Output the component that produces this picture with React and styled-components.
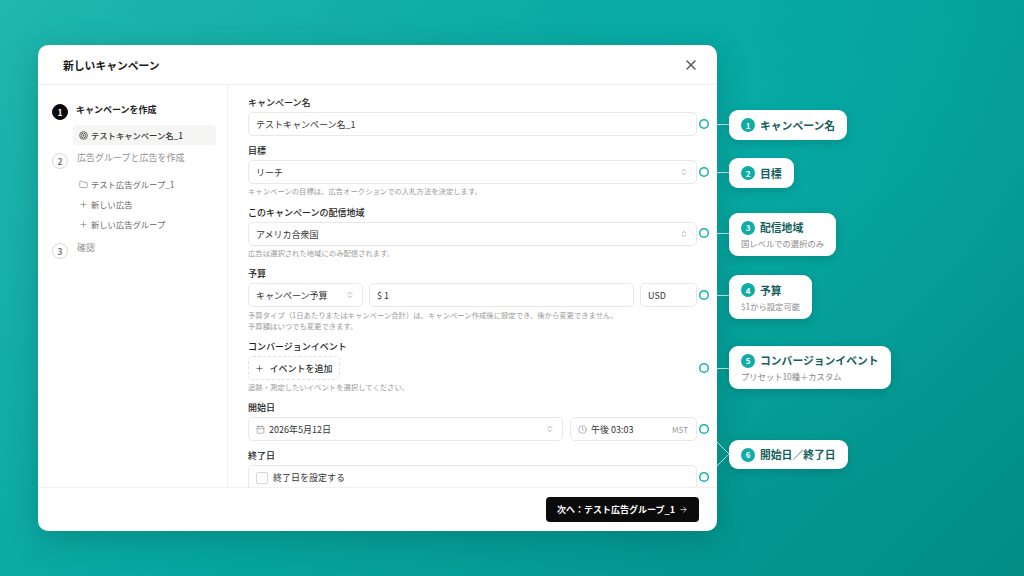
import React from "react";
import styled, { createGlobalStyle } from "styled-components";
import {
  X,
  Folder,
  Plus,
  Calendar,
  Clock,
  ChevronsUpDown,
  ArrowRight,
} from "lucide-react";

const GlobalStyle = createGlobalStyle`
  html, body {
    margin: 0;
    padding: 0;
    width: 1024px;
    height: 576px;
    overflow: hidden;
  }
  * { box-sizing: border-box; }
  body {
    font-family: "Noto Sans CJK JP", "Noto Sans", sans-serif;
    color: #171717;
  }
`;

const Page = styled.div`
  position: relative;
  width: 1024px;
  height: 576px;
  padding: 45px 0 0 38px;
  background:
    radial-gradient(circle at 72% 20%, rgba(8, 176, 170, 0.55), rgba(8, 176, 170, 0) 45%),
    linear-gradient(135deg, #1fb7ae 0%, #07a6a0 45%, #028d87 100%);
`;

const Modal = styled.div`
  width: 679px;
  height: 486px;
  background: #fff;
  border-radius: 10px;
  display: flex;
  flex-direction: column;
  overflow: hidden;
  box-shadow: 0 8px 30px rgba(0, 60, 60, 0.25);
`;

const ModalHeader = styled.div`
  height: 40px;
  flex: none;
  display: flex;
  align-items: center;
  justify-content: space-between;
  padding: 0 18px 0 25px;
  border-bottom: 1px solid #f1f1ef;
`;

const ModalTitle = styled.div`
  font-size: 10.8px;
  font-weight: 700;
  color: #1a1a1a;
`;

const ModalBody = styled.div`
  flex: 1;
  min-height: 0;
  display: flex;
`;

const Sidebar = styled.div`
  width: 190px;
  flex: none;
  border-right: 1px solid #f1f1ef;
  padding: 18px 11px 0 14px;
`;

const Step = styled.div`
  display: flex;
  gap: 8px;
`;

const StepNumber = styled.div`
  width: 16px;
  height: 16px;
  flex: none;
  margin-top: ${(p) => (p.$active ? 1 : 2)}px;
  border-radius: 50%;
  display: flex;
  align-items: center;
  justify-content: center;
  font-size: 8.5px;
  font-weight: 700;
  background: ${(p) => (p.$active ? "#0a0a0a" : "#fff")};
  color: ${(p) => (p.$active ? "#fff" : "#777")};
  border: 1px solid ${(p) => (p.$active ? "#0a0a0a" : "#d8d8d6")};
`;

const StepLabel = styled.div`
  font-size: 9px;
  line-height: 14px;
  font-weight: ${(p) => (p.$active ? 600 : 400)};
  color: ${(p) => (p.$active ? "#222" : "#8f8f8f")};
  margin-left: ${(p) => (p.$active ? 0 : 1)}px;
`;

const SideItem = styled.div`
  height: 20px;
  margin-left: 21px;
  padding-left: 6px;
  display: flex;
  align-items: center;
  gap: 3px;
  border-radius: 4px;
  font-size: 8.3px;
  font-weight: ${(p) => (p.$active ? 500 : 400)};
  color: ${(p) => (p.$active ? "#333" : "#666")};
  background: ${(p) => (p.$active ? "#f5f5f3" : "transparent")};
`;

const SideList = styled.div`
  margin: ${(p) => p.$top}px 0 ${(p) => p.$bottom}px;
`;

const Form = styled.div`
  flex: 1;
  min-width: 0;
  overflow: hidden;
  padding: 11px 20px 0 20px;
`;

const Field = styled.div`
  margin-bottom: ${(p) => p.$gap}px;
`;

const Label = styled.div`
  font-size: 9px;
  line-height: 14px;
  font-weight: 500;
  color: #222;
  margin-bottom: 2px;
`;

const Row = styled.div`
  display: flex;
  gap: ${(p) => p.$gap || 6}px;
`;

const Control = styled.div`
  height: 24px;
  flex: ${(p) => (p.$width ? `0 0 ${p.$width}px` : 1)};
  min-width: 0;
  display: flex;
  align-items: center;
  gap: 4px;
  padding: 0 8px 0 7px;
  border: 1px solid #e8e8e6;
  border-radius: 5px;
  background: #fff;
  font-size: 9px;
  color: #333;
`;

const Grow = styled.span`
  flex: 1;
  min-width: 0;
  white-space: nowrap;
`;

const Zone = styled.span`
  font-size: 8px;
  color: #999;
`;

const Hint = styled.div`
  font-size: 7.35px;
  line-height: 11px;
  color: #9a9a9a;
  margin-top: ${(p) => p.$top ?? 1}px;
`;

const AddButton = styled.div`
  width: 92px;
  height: 24px;
  display: flex;
  align-items: center;
  justify-content: center;
  gap: 5px;
  border: 1px dashed #e2e2e0;
  border-radius: 5px;
  font-size: 9px;
  font-weight: 500;
  color: #333;
`;

const CheckRow = styled(Control)`
  height: 30px;
  padding: 0 0 5px 7px;
`;

const Check = styled.span`
  width: 12px;
  height: 12px;
  border: 1px solid #d8d8d6;
  border-radius: 2px;
  margin-right: 1px;
`;

const ModalFooter = styled.div`
  height: 44px;
  flex: none;
  display: flex;
  align-items: center;
  justify-content: flex-end;
  padding: 0 18px 0 0;
  border-top: 1px solid #f1f1ef;
`;

const NextButton = styled.div`
  width: 153px;
  height: 25px;
  display: flex;
  align-items: center;
  justify-content: center;
  gap: 4px;
  background: #0b0b0b;
  border-radius: 4px;
  color: #fff;
  font-size: 9px;
  font-weight: 600;
`;

// annotations sit on top of the screenshot, so they are placed by coordinates
const Ring = styled.span`
  position: absolute;
  left: 699px;
  top: ${(p) => p.$y - 5}px;
  width: 10px;
  height: 10px;
  border-radius: 50%;
  background: #fff;
  box-shadow: inset 0 0 0 1.5px #12b3ad;
`;

const Connector = styled.span`
  position: absolute;
  left: 717px;
  top: ${(p) => p.$y - 0.5}px;
  width: 12px;
  height: 1px;
  background: rgba(255, 255, 255, 0.7);
`;

const ForkLines = styled.svg`
  position: absolute;
  left: 717px;
  top: 441px;
`;

const Callout = styled.div`
  position: absolute;
  left: 729px;
  top: ${(p) => p.$top}px;
  height: ${(p) => p.$height}px;
  padding: 0 12px;
  display: flex;
  flex-direction: column;
  justify-content: center;
  background: #fff;
  border-radius: 9px;
  box-shadow: 0 3px 10px rgba(0, 60, 60, 0.22);
  white-space: nowrap;
`;

const CalloutTitle = styled.div`
  display: flex;
  align-items: center;
  gap: 5px;
  font-size: 10.8px;
  line-height: 15px;
  font-weight: 700;
  color: #145f5c;
`;

const CalloutNumber = styled.span`
  width: 14px;
  height: 14px;
  border-radius: 50%;
  background: #10aca6;
  color: #fff;
  font-size: 8px;
  font-weight: 700;
  display: flex;
  align-items: center;
  justify-content: center;
`;

const CalloutText = styled.div`
  font-size: 8.3px;
  line-height: 12px;
  margin-top: 2px;
  color: #888;
`;

const callouts = [
  { n: 1, title: "キャンペーン名", top: 110, height: 30 },
  { n: 2, title: "目標", top: 158, height: 30 },
  { n: 3, title: "配信地域", text: "国レベルでの選択のみ", top: 213, height: 43 },
  { n: 4, title: "予算", text: "$1から設定可能", top: 275, height: 44 },
  { n: 5, title: "コンバージョンイベント", text: "プリセット10種＋カスタム", top: 346, height: 43 },
  { n: 6, title: "開始日／終了日", top: 440, height: 29 },
];

const ringRows = [124, 172, 233, 295, 368, 429, 477];
const connectorRows = [124, 172, 233, 295, 368];

const TargetIcon = () => (
  <svg width="9" height="9" viewBox="0 0 10 10" fill="none">
    <circle cx="5" cy="5" r="4.3" stroke="#555" strokeWidth="1" />
    <circle cx="5" cy="5" r="2.5" stroke="#555" strokeWidth="1" />
    <circle cx="5" cy="5" r="1" fill="#555" />
  </svg>
);

const App = () => {
  return (
    <Page>
      <GlobalStyle />
      <Modal>
        <ModalHeader>
          <ModalTitle>新しいキャンペーン</ModalTitle>
          <X size={16} color="#555" strokeWidth={2} />
        </ModalHeader>
        <ModalBody>
          <Sidebar>
            <Step>
              <StepNumber $active>1</StepNumber>
              <StepLabel $active>キャンペーンを作成</StepLabel>
            </Step>
            <SideList $top={5} $bottom={6}>
              <SideItem $active>
                <TargetIcon />
                テストキャンペーン名_1
              </SideItem>
            </SideList>
            <Step>
              <StepNumber>2</StepNumber>
              <StepLabel>広告グループと広告を作成</StepLabel>
            </Step>
            <SideList $top={5} $bottom={7}>
              <SideItem>
                <Folder size={9} strokeWidth={1.4} />
                テスト広告グループ_1
              </SideItem>
              <SideItem>
                <Plus size={9} strokeWidth={1.4} />
                新しい広告
              </SideItem>
              <SideItem>
                <Plus size={9} strokeWidth={1.4} />
                新しい広告グループ
              </SideItem>
            </SideList>
            <Step>
              <StepNumber>3</StepNumber>
              <StepLabel>確認</StepLabel>
            </Step>
          </Sidebar>
          <Form>
            <Field $gap={8}>
              <Label>キャンペーン名</Label>
              <Control>テストキャンペーン名_1</Control>
            </Field>
            <Field $gap={10}>
              <Label>目標</Label>
              <Control>
                <Grow>リーチ</Grow>
                <ChevronsUpDown size={8} color="#888" />
              </Control>
              <Hint>キャンペーンの目標は、広告オークションでの入札方法を決定します。</Hint>
            </Field>
            <Field $gap={9}>
              <Label>このキャンペーンの配信地域</Label>
              <Control>
                <Grow>アメリカ合衆国</Grow>
                <ChevronsUpDown size={8} color="#888" />
              </Control>
              <Hint>広告は選択された地域にのみ配信されます。</Hint>
            </Field>
            <Field $gap={9}>
              <Label>予算</Label>
              <Row>
                <Control $width={115}>
                  <Grow>キャンペーン予算</Grow>
                  <ChevronsUpDown size={8} color="#888" />
                </Control>
                <Control>$ 1</Control>
                <Control $width={57}>USD</Control>
              </Row>
              <Hint $top={2}>
                予算タイプ（1日あたりまたはキャンペーン合計）は、キャンペーン作成後に設定でき、後から変更できません。
              </Hint>
              <Hint $top={0}>予算額はいつでも変更できます。</Hint>
            </Field>
            <Field $gap={9}>
              <Label>コンバージョンイベント</Label>
              <AddButton>
                <Plus size={9} strokeWidth={1.6} />
                イベントを追加
              </AddButton>
              <Hint>追跡・測定したいイベントを選択してください。</Hint>
            </Field>
            <Field $gap={8}>
              <Label>開始日</Label>
              <Row $gap={7}>
                <Control>
                  <Calendar size={9} color="#777" strokeWidth={1.4} />
                  <Grow>2026年5月12日</Grow>
                  <ChevronsUpDown size={8} color="#888" />
                </Control>
                <Control $width={127}>
                  <Clock size={9} color="#777" strokeWidth={1.4} />
                  <Grow>午後 03:03</Grow>
                  <Zone>MST</Zone>
                </Control>
              </Row>
            </Field>
            <Field $gap={0}>
              <Label>終了日</Label>
              <CheckRow>
                <Check />
                終了日を設定する
              </CheckRow>
            </Field>
          </Form>
        </ModalBody>
        <ModalFooter>
          <NextButton>
            次へ：テスト広告グループ_1
            <ArrowRight size={9} strokeWidth={1.8} />
          </NextButton>
        </ModalFooter>
      </Modal>

      {ringRows.map((y) => (
        <Ring key={y} $y={y} />
      ))}
      {connectorRows.map((y) => (
        <Connector key={y} $y={y} />
      ))}
      <ForkLines width="12" height="26" viewBox="0 0 12 26" fill="none">
        <path d="M0 1 L12 13 L0 25" stroke="rgba(255,255,255,0.7)" strokeWidth="1" />
      </ForkLines>
      {callouts.map((c) => (
        <Callout key={c.n} $top={c.top} $height={c.height}>
          <CalloutTitle>
            <CalloutNumber>{c.n}</CalloutNumber>
            {c.title}
          </CalloutTitle>
          {c.text && <CalloutText>{c.text}</CalloutText>}
        </Callout>
      ))}
    </Page>
  );
};

export default App;
